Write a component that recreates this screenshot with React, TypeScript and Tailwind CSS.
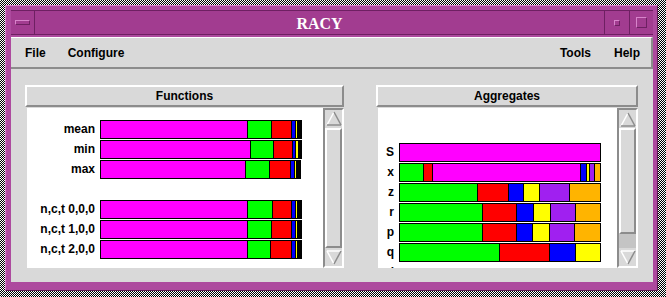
import React from "react";

type Seg = [keyof typeof COLORS, number];

const COLORS = {
  m: "bg-[#ff00ff]",
  g: "bg-[#00ff00]",
  r: "bg-[#ff0000]",
  b: "bg-[#0000ff]",
  y: "bg-[#ffff00]",
  k: "bg-[#000000]",
  p: "bg-[#a020f0]",
  o: "bg-[#ffb400]",
};

type Row = { label: string; segs?: Seg[] } | null;

const funcRows: Row[] = [
  { label: "mean", segs: [["m", 146], ["g", 24], ["r", 20], ["b", 4], ["y", 2], ["k", 4]] },
  { label: "min", segs: [["m", 149], ["g", 23], ["r", 19], ["b", 3], ["y", 3], ["k", 3]] },
  { label: "max", segs: [["m", 144], ["g", 24], ["r", 21], ["b", 4], ["y", 2], ["k", 4]] },
  null,
  { label: "n,c,t 0,0,0", segs: [["m", 146], ["g", 25], ["r", 19], ["b", 4], ["y", 2], ["k", 4]] },
  { label: "n,c,t 1,0,0", segs: [["m", 146], ["g", 24], ["r", 20], ["b", 4], ["y", 2], ["k", 4]] },
  { label: "n,c,t 2,0,0", segs: [["m", 146], ["g", 23], ["r", 21], ["b", 4], ["y", 2], ["k", 4]] },
];

const aggRows: Row[] = [
  { label: "S", segs: [["m", 200]] },
  { label: "x", segs: [["g", 23], ["r", 9], ["m", 148], ["b", 6], ["y", 3], ["p", 5], ["o", 6]] },
  { label: "z", segs: [["g", 77], ["r", 31], ["b", 15], ["y", 16], ["p", 30], ["o", 31]] },
  { label: "r", segs: [["g", 82], ["r", 34], ["b", 17], ["y", 17], ["p", 25], ["o", 25]] },
  { label: "p", segs: [["g", 82], ["r", 34], ["b", 16], ["y", 17], ["p", 25], ["o", 26]] },
  { label: "q", segs: [["g", 99], ["r", 50], ["b", 26], ["y", 25]] },
  { label: "i" },
];

function Bar({ segs }: { segs: Seg[] }) {
  const total = segs.reduce((a, s) => a + s[1], 0);
  return (
    <div className="flex h-[19px] shrink-0 border border-black" style={{ width: total + 2 }}>
      {segs.map(([c, w], i) => (
        <div
          key={i}
          className={`h-full shrink-0 ${COLORS[c]} ${i > 0 ? "border-l border-black" : ""}`}
          style={{ width: w }}
        />
      ))}
    </div>
  );
}

function Rows({ rows, labelW }: { rows: Row[]; labelW: string }) {
  return (
    <div className="flex flex-col">
      {rows.map((row, i) =>
        row === null ? (
          <div key={i} className="h-[20px]" />
        ) : (
          <div key={i} className="flex h-[20px] items-start">
            <div className={`${labelW} shrink-0 text-right leading-[19px] whitespace-nowrap`}>{row.label}</div>
            <div className="ml-[5px]">{row.segs && <Bar segs={row.segs} />}</div>
          </div>
        )
      )}
    </div>
  );
}

function UpArrow() {
  return (
    <svg width="16" height="17" viewBox="0 0 16 17" className="block">
      <polygon points="8,2 15,15 1,15" fill="#d9d9d9" />
      <line x1="8" y1="2" x2="1" y2="15" stroke="#ffffff" strokeWidth="1.5" />
      <line x1="8" y1="2" x2="15" y2="15" stroke="#8c8c8c" strokeWidth="1.5" />
      <line x1="1" y1="15" x2="15" y2="15" stroke="#8c8c8c" strokeWidth="1.5" />
    </svg>
  );
}

function DownArrow() {
  return (
    <svg width="16" height="17" viewBox="0 0 16 17" className="block">
      <polygon points="1,2 15,2 8,15" fill="#d9d9d9" />
      <line x1="1" y1="2" x2="15" y2="2" stroke="#ffffff" strokeWidth="1.5" />
      <line x1="1" y1="2" x2="8" y2="15" stroke="#ffffff" strokeWidth="1.5" />
      <line x1="15" y1="2" x2="8" y2="15" stroke="#8c8c8c" strokeWidth="1.5" />
    </svg>
  );
}

function Scrollbar({ thumb }: { thumb: string }) {
  return (
    <div className="flex w-[21px] shrink-0 flex-col border-2 border-t-[#8c8c8c] border-l-[#8c8c8c] border-r-white border-b-white bg-[#c4c4c4]">
      <div className="flex h-[18px] items-center justify-center bg-[#d9d9d9]">
        <UpArrow />
      </div>
      <div className={`${thumb} border-2 border-t-white border-l-white border-r-[#8c8c8c] border-b-[#8c8c8c] bg-[#d9d9d9]`} />
      <div className="flex-1" />
      <div className="flex h-[18px] items-center justify-center bg-[#d9d9d9]">
        <DownArrow />
      </div>
    </div>
  );
}

function Panel({
  title,
  width,
  children,
  thumb,
}: {
  title: string;
  width: string;
  children: React.ReactNode;
  thumb: string;
}) {
  return (
    <div className={`flex ${width} flex-col`}>
      <div className="flex h-[22px] items-center justify-center border-2 border-t-white border-l-white border-r-[#8c8c8c] border-b-[#8c8c8c] bg-[#d9d9d9]">
        {title}
      </div>
      <div className="flex h-[161px] pt-[1px] pl-[2px]">
        <div className="flex-1 overflow-hidden bg-white">{children}</div>
        <Scrollbar thumb={thumb} />
      </div>
    </div>
  );
}

export default function App() {
  return (
    <div className="h-[297px] w-[666px] overflow-hidden pt-[5px] pl-[5px] [background:repeating-conic-gradient(#000_0_25%,#fff_0_50%)_0_0/2px_2px] font-['Liberation_Sans',Arial,sans-serif] text-[12px] font-bold text-black">
      <div className="flex h-[286px] w-[653px] flex-col border border-t-[#d884cb] border-l-[#d884cb] border-r-[#5c1a50] border-b-[#5c1a50] bg-[#ad4a9e] pt-[4px] pr-[4px] pb-[8px] pl-[5px]">
        {/* Title bar */}
        <div className="flex h-[25px] shrink-0 border-y border-[#6e2062] bg-[#a23c90]">
          <div className="flex w-[24px] shrink-0 items-center border-r border-[#6e2062] pl-[4px]">
            <div className="h-[5px] w-[15px] border border-t-[#d884cb] border-l-[#d884cb] border-r-[#6e2062] border-b-[#6e2062]" />
          </div>
          <div className="flex flex-1 items-center justify-center pt-[2px] font-['Liberation_Serif',serif] text-[16px] font-bold text-white">
            RACY
          </div>
          <div className="flex w-[25px] shrink-0 items-center justify-center border-l border-[#6e2062]">
            <div className="h-[6px] w-[6px] border border-t-[#d884cb] border-l-[#d884cb] border-r-[#6e2062] border-b-[#6e2062]" />
          </div>
          <div className="flex w-[24px] shrink-0 items-center justify-center border-l border-[#6e2062]">
            <div className="h-[11px] w-[11px] border border-t-[#d884cb] border-l-[#d884cb] border-r-[#6e2062] border-b-[#6e2062]" />
          </div>
        </div>

        {/* Content */}
        <div className="mt-[2px] flex h-[245px] shrink-0 flex-col bg-[#d9d9d9]">
          <div className="flex h-[32px] shrink-0 items-center border-t border-r-2 border-b-2 border-t-white border-r-[#8c8c8c] border-b-[#8c8c8c] pr-[11px] pl-[14px]">
            <span>File</span>
            <span className="ml-[22px]">Configure</span>
            <span className="ml-auto">Tools</span>
            <span className="ml-[23px]">Help</span>
          </div>

          <div className="mt-[16px] flex gap-[32px] pl-[14px]">
            <Panel title="Functions" width="w-[319px]" thumb="h-[121px]">
              <div className="pt-[12px]">
                <Rows rows={funcRows} labelW="w-[68px]" />
              </div>
            </Panel>
            <Panel title="Aggregates" width="w-[262px]" thumb="h-[106px]">
              <div className="pt-[35px]">
                <Rows rows={aggRows} labelW="w-[16px]" />
              </div>
            </Panel>
          </div>
        </div>
      </div>
    </div>
  );
}
